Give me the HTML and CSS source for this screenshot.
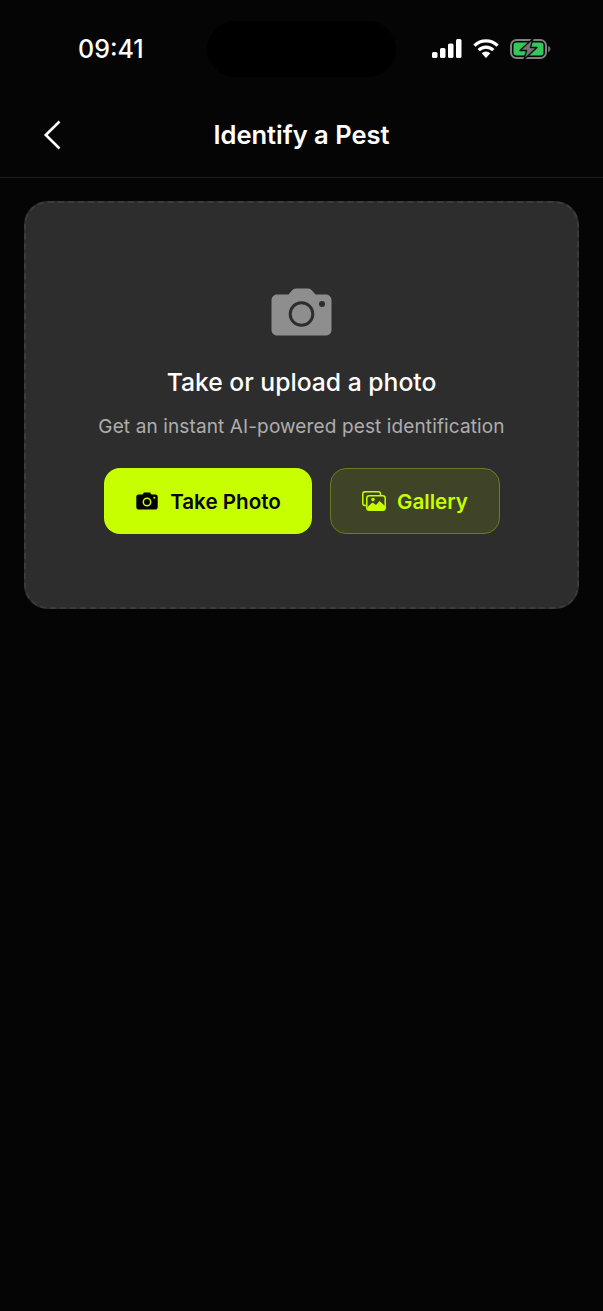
FILE: index.html
```html
<!DOCTYPE html>
<html lang="en">
<head>
<meta charset="utf-8">
<title>Identify a Pest</title>
<link rel="stylesheet" href="styles.css">
</head>
<body>
<div class="screen">
  <div class="status">
    <span class="time">09:41</span>
    <div class="island"></div>
    <div class="status-icons">
      <svg class="i-signal" width="30" height="20" viewBox="0 0 30 20"><rect x="0" y="13" width="5.500" height="6" rx="1.600" fill="#fff"/><rect x="8" y="9" width="5.500" height="10" rx="1.600" fill="#fff"/><rect x="16" y="4.500" width="5.500" height="14.500" rx="1.600" fill="#fff"/><rect x="24" y="0" width="5.500" height="19" rx="1.600" fill="#fff"/></svg>
      <svg class="i-wifi" width="26" height="20" viewBox="0 0 26 20"><path d="M13 19l4.300-4.700a6 6 0 0 0-8.600 0z" fill="#fff"/><path d="M5.700 11.200a10.300 10.300 0 0 1 14.600 0" fill="none" stroke="#fff" stroke-width="3.200"/><path d="M1.400 6.600a16.400 16.400 0 0 1 23.200 0" fill="none" stroke="#fff" stroke-width="3.200"/></svg>
      <svg class="i-batt" width="41" height="22" viewBox="0 0 41 22"><rect x="1" y="2" width="35" height="18" rx="5.500" fill="none" stroke="#808080" stroke-width="2"/><rect x="3.500" y="4.500" width="30" height="13" rx="3" fill="#34c759"/><path d="M38 8v6c1.500-.4 2.500-1.600 2.500-3S39.500 8.400 38 8z" fill="#6a6a6a"/><path d="M23 .5L10 12.500h6.500L14 21.500 27 9.500h-6.500z" fill="#747474" stroke="#0a0a0a" stroke-width="1.300" stroke-linejoin="round"/></svg>
    </div>
  </div>
  <header class="nav">
    <svg class="back" width="20" height="30" viewBox="0 0 20 30"><path d="M17.500 1.500L3.800 15l13.700 13.500" fill="none" stroke="#fff" stroke-width="2.600"/></svg>
    <h1 class="title">Identify a Pest</h1>
  </header>
  <main class="content">
    <section class="card">
      <svg class="hero-icon" width="62" height="50" viewBox="0 0 62 50">
        <path d="M6 6.500h11.500l3.500-4C22 1.200 23.200.5 25 .5h12c1.800 0 3 .7 4 2L44.500 6.500H55c3 0 5.500 2.500 5.500 5.500V42c0 3-2.500 5.500-5.500 5.500H6C3 47.500.5 45 .500 42V12C.5 9 3 6.500 6 6.500z" fill="#8e8e8e"/>
        <circle cx="30.500" cy="26" r="11.300" fill="none" stroke="#2d2d2d" stroke-width="3"/>
        <circle cx="51" cy="16" r="3" fill="#2d2d2d"/>
      </svg>
      <h2 class="card-title">Take or upload a photo</h2>
      <p class="card-sub">Get an instant AI-powered pest identification</p>
      <div class="actions">
        <button class="btn btn-primary">
          <svg width="22" height="18" viewBox="0 0 22 18"><path d="M2.500 2.500h4l1.500-2h6l1.500 2h4c1.200 0 2.200 1 2.200 2.200v10.600c0 1.200-1 2.200-2.200 2.200H2.500C1.300 17.500.3 16.500.3 15.300V4.700c0-1.200 1-2.200 2.200-2.200z" fill="#000"/><circle cx="11" cy="10" r="3.700" fill="none" stroke="#c8ff00" stroke-width="1.500"/><circle cx="18.300" cy="5.800" r="1" fill="#c8ff00"/></svg>
          Take Photo
        </button>
        <button class="btn btn-secondary">
          <svg width="24" height="20" viewBox="0 0 24 20"><path d="M5 14.500H3c-1.300 0-2.200-.9-2.200-2.200V3c0-1.300.9-2.200 2.200-2.200h13.300c1.300 0 2.200.9 2.200 2.200v1" fill="none" stroke="#c8ff00" stroke-width="1.500"/><rect x="4.800" y="4.800" width="18.400" height="14.400" rx="2.500" fill="#3f4426" stroke="#c8ff00" stroke-width="1.500"/><path d="M5.500 16l5-4.500 3.500 2.500 3.500-4 5.500 5v2.500c0 1.200-.8 2-2 2H7.500c-1.200 0-2-.8-2-2z" fill="#c8ff00"/><circle cx="11" cy="8.500" r="1.700" fill="#c8ff00"/></svg>
          Gallery
        </button>
      </div>
    </section>
  </main>
</div>
</body>
</html>
```
FILE: styles.css
```css
* { box-sizing: border-box; margin: 0; padding: 0; }
html, body { height: 100%; background: #050505; }
body { font-family: Inter, "Liberation Sans", sans-serif; color: #fff; }
.screen { width: 603px; height: 1311px; overflow: hidden; background: #050505; }
.status { height: 94px; display: flex; align-items: flex-start; position: relative; }
.time { position: absolute; left: 78px; top: 35px; font-size: 25px; line-height: 29px; font-weight: 500; color: #fff; }
.island { position: absolute; left: 207px; top: 21px; width: 189px; height: 56px; border-radius: 28px; background: #000; }
.status-icons { position: absolute; left: 432px; top: 38px; display: flex; align-items: flex-start; gap: 11px; }
.i-signal, .i-wifi { margin-top: 1px; }
.nav { height: 84px; display: flex; align-items: center; justify-content: center; position: relative; border-bottom: 1px solid #1f1f1f; padding-bottom: 1px; }
.back { position: absolute; left: 42px; top: 26px; }
.title { font-size: 25.500px; line-height: 30px; font-weight: 600; }
.content { padding: 23px 24px 0; }
.card { height: 408px; border: 2px dashed #3c3c3c; border-radius: 24px; background: #2d2d2d; display: flex; flex-direction: column; align-items: center; padding-top: 85px; }
.card-title { margin-top: 29px; font-size: 24.700px; line-height: 30px; font-weight: 500; }
.card-sub { margin-top: 17px; font-size: 19px; line-height: 26px; font-weight: 400; color: #adadad; letter-spacing: 0.12px; }
.actions { margin-top: 28px; display: flex; gap: 18px; }
.btn { height: 66px; border-radius: 16px; display: flex; align-items: center; justify-content: center; font-family: inherit; font-size: 20.600px; font-weight: 600; }
.btn-primary { width: 208px; gap: 12px; padding-left: 2px; background: #c8ff00; color: #050505; border: none; }
.btn-secondary { width: 170px; gap: 11px; padding-left: 1px; background: #3f4426; color: #c8ff00; border: 1.500px solid #6b7a22; }
```
